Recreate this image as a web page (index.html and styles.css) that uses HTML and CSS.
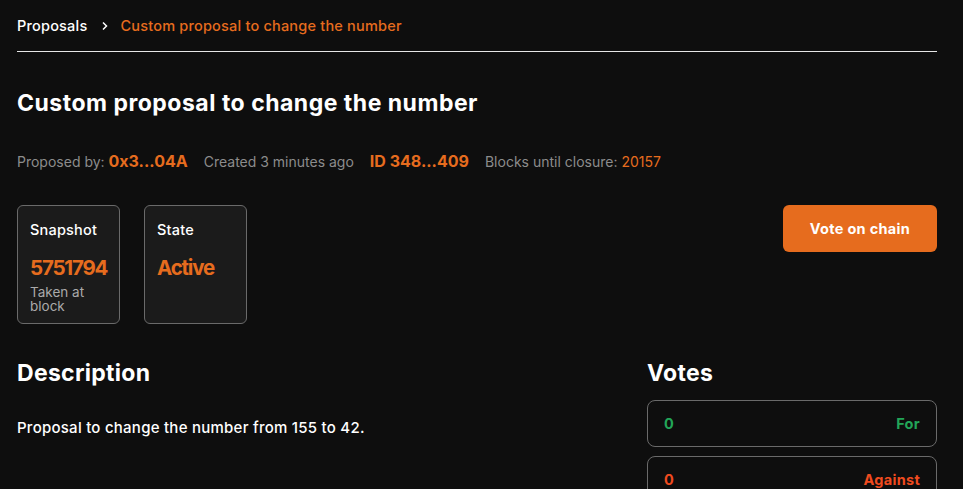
FILE: index.html
```html
<!DOCTYPE html>
<html>
<head>
<meta charset="utf-8">
<link rel="stylesheet" href="styles.css">
</head>
<body>
<div class="page">
  <nav class="crumbs">
    <span class="crumb">Proposals</span>
    <svg class="chev" width="8" height="10" viewBox="0 0 8 10"><path d="M2 1.5 L5.5 5 L2 8.5" fill="none" stroke="#fff" stroke-width="1.5"/></svg>
    <span class="crumb current">Custom proposal to change the number</span>
  </nav>
  <h1 class="title">Custom proposal to change the number</h1>
  <div class="meta">
    <span>Proposed by: <b class="hl">0x3...04A</b></span>
    <span>Created 3 minutes ago</span>
    <b class="hl">ID 348...409</b>
    <span>Blocks until closure: <span class="hl2">20157</span></span>
  </div>
  <div class="row">
    <div class="cards">
      <div class="card">
        <div class="card-label">Snapshot</div>
        <div class="card-value">5751794</div>
        <div class="card-sub">Taken at block</div>
      </div>
      <div class="card">
        <div class="card-label">State</div>
        <div class="card-value">Active</div>
      </div>
    </div>
    <button class="vote-btn">Vote on chain</button>
  </div>
  <div class="main">
    <section class="desc">
      <h2>Description</h2>
      <p>Proposal to change the number from 155 to 42.</p>
    </section>
    <aside class="votes">
      <h2>Votes</h2>
      <div class="vote for"><span>0</span><span>For</span></div>
      <div class="vote against"><span>0</span><span>Against</span></div>
    </aside>
  </div>
</div>
</body>
</html>
```
FILE: styles.css
```css
html, body { margin: 0; padding: 0; background: #0e0e0e; }
body { font-family: Inter, "Noto Sans", sans-serif; color: #fff; }
.page { padding: 0 26px 0 17px; }
.crumbs { display: flex; align-items: center; height: 51px; border-bottom: 1px solid #e6e6e6; font-size: 14.5px; font-weight: 500; letter-spacing: 0.2px; }
.chev { margin: 0 11px 0 14px; }
.crumb.current { color: #e66c1e; }
.title { margin: 0; padding-top: 38px; font-size: 23px; font-weight: 700; line-height: 26px; letter-spacing: 0.5px; }
.meta { display: flex; align-items: baseline; gap: 16px; margin-top: 35px; font-size: 14px; color: #8c8c8c; letter-spacing: 0; }
.meta .hl { color: #e66c1e; font-size: 16px; font-weight: 700; letter-spacing: 0; }
.meta .hl2 { color: #e66c1e; }
.row { display: flex; justify-content: space-between; align-items: flex-start; margin-top: 34px; }
.cards { display: flex; gap: 24px; }
.card { width: 103px; height: 119px; box-sizing: border-box; background: #1b1b1b; border: 1px solid #6a6a6a; border-radius: 6px; padding: 15px 12px; }
.card-label { font-size: 14.5px; font-weight: 500; letter-spacing: 0.2px; }
.card-value { margin-top: 18px; font-size: 20.5px; font-weight: 700; color: #e66c1e; letter-spacing: -1.2px; line-height: 24px; }
.card-sub { margin-top: 5px; font-size: 13.5px; line-height: 14px; color: #aaa; width: 70px; }
.vote-btn { width: 154px; height: 47px; background: #e66c1e; color: #fff; border: 0; border-radius: 6px; font-family: inherit; font-size: 14.5px; font-weight: 700; letter-spacing: 0.3px; }
.main { display: flex; justify-content: space-between; margin-top: 35px; }
.main h2 { margin: 0; font-size: 23px; font-weight: 700; line-height: 28px; letter-spacing: 0.3px; }
.desc p { margin: 31px 0 0; font-size: 15px; font-weight: 500; letter-spacing: 0.25px; }
.votes { width: 290px; }
.vote { display: flex; justify-content: space-between; align-items: center; height: 47px; box-sizing: border-box; border: 1px solid #6a6a6a; border-radius: 8px; padding: 0 16px; margin-bottom: 9px; font-size: 14.5px; font-weight: 700; letter-spacing: 0.3px; }
.votes h2 { margin-bottom: 13px; }
.vote.for { color: #22a558; }
.vote.against { color: #f04b1f; }
```
